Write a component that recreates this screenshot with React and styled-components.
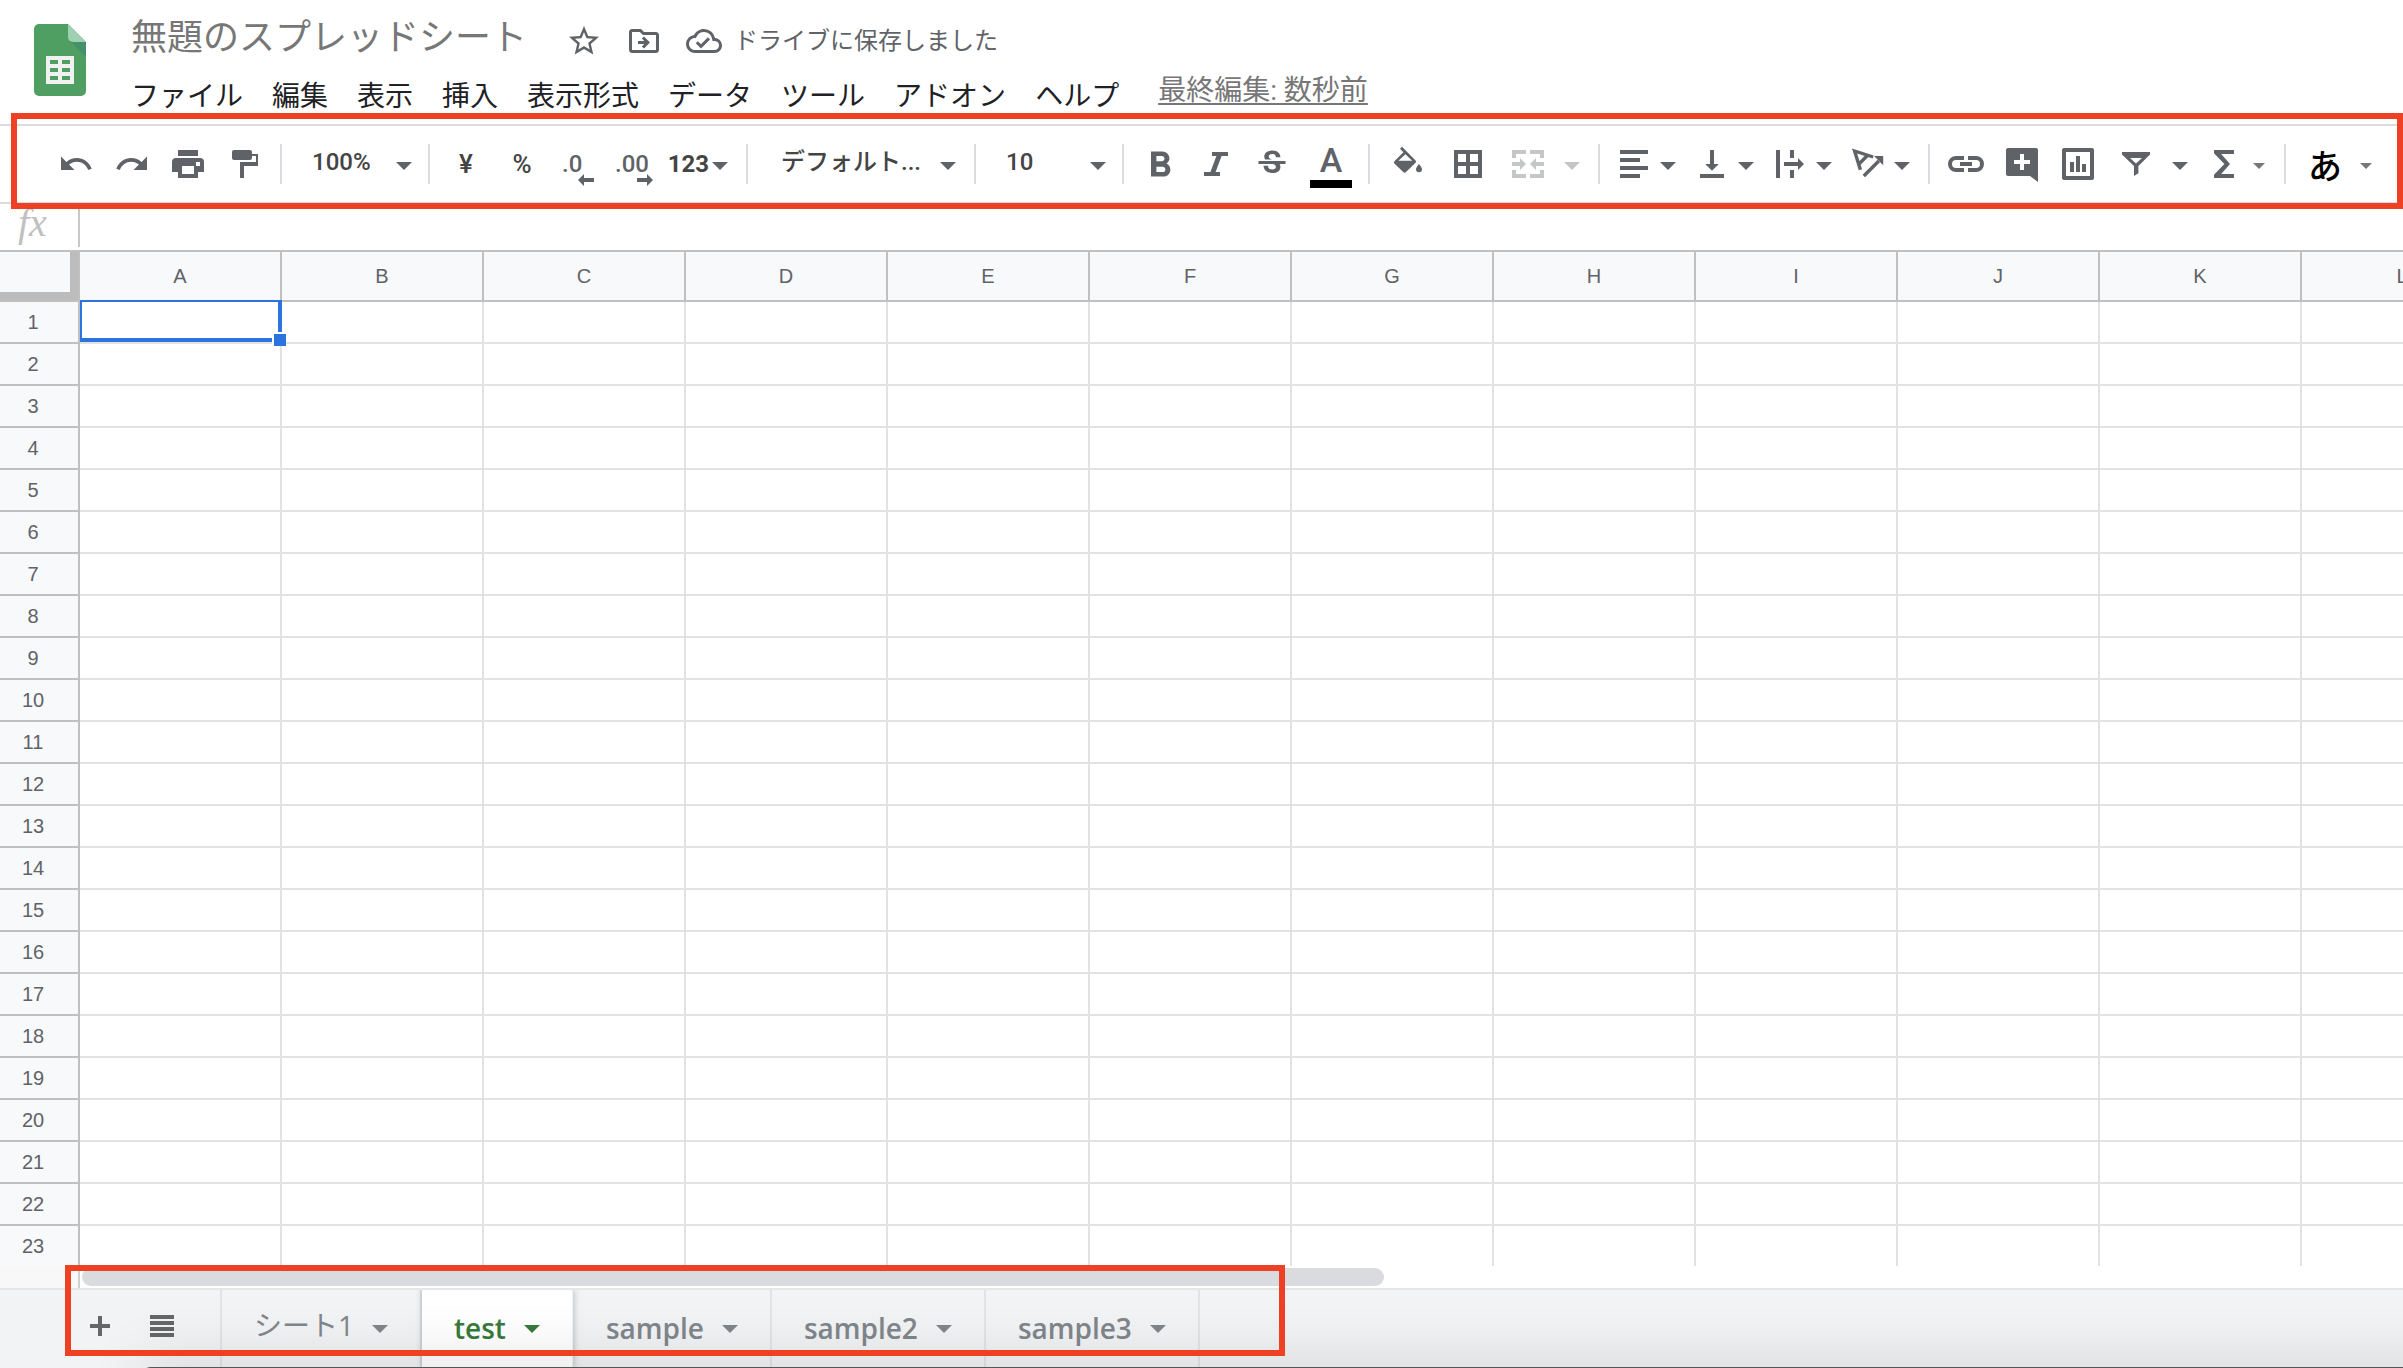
import React from "react";
import styled, { createGlobalStyle } from "styled-components";
import {
  MdUndo,
  MdRedo,
  MdStarBorder,
  MdOutlineDriveFileMove,
  MdOutlineCloudDone,
  MdFormatBold,
  MdStrikethroughS,
} from "react-icons/md";

const MENUS = ["ファイル", "編集", "表示", "挿入", "表示形式", "データ", "ツール", "アドオン", "ヘルプ"];
const COLUMNS = ["A", "B", "C", "D", "E", "F", "G", "H", "I", "J", "K", "L"];
const ROWS = Array.from({ length: 23 }, (_, i) => i + 1);
const SHEETS = [
  { name: "シート1", kana: true },
  { name: "test", active: true },
  { name: "sample" },
  { name: "sample2" },
  { name: "sample3" },
];

// toolbar icons, all on an 18 x 18 grid
const ICONS = {
  print:
    "M4 2h10v3H4z M3 6h12a2 2 0 0 1 2 2v5h-3v3H4v-3H1V8a2 2 0 0 1 2-2z M6 10v4h6v-4z M13 8v2h2V8z",
  paint: "M4 2h8a1 1 0 0 1 1 1v1h3v6H9v6H7V8h8V5h-2v1a1 1 0 0 1-1 1H4a1 1 0 0 1-1-1V3a1 1 0 0 1 1-1z",
  italic: "M7 3h8v2h-3.2L8.8 13H11v2H3v-2h3.2L9.2 5H7z",
  fill:
    "M12.8 7.2 6 .4 5 1.4l1.7 1.7-4.5 4.5a.9.9 0 0 0 0 1.2l4.4 4.2a1 1 0 0 0 1.4 0l4.8-4.6a.9.9 0 0 0 0-1.2z M4.2 7.4 7.7 4.1l3.4 3.3z M14.5 9s-1.5 1.7-1.5 2.6a1.5 1.5 0 0 0 3 0C16 10.7 14.5 9 14.5 9z",
  borders: "M2 2v14h14V2z M8 14H4v-4h4z M8 8H4V4h4z M14 14h-4v-4h4z M14 8h-4V4h4z",
  merge:
    "M1 2h7v2H3v2H1z M10 2h7v4h-2V4h-5z M1 12h2v2h5v2H1z M15 12h2v4h-7v-2h5z M1 8h4V6l3 3-3 3v-2H1z M17 8h-4V6l-3 3 3 3v-2h4z",
  align: "M2 2h14v2H2z M2 6h10v2H2z M2 10h14v2H2z M2 14h10v2H2z",
  valign: "M3 14h12v2H3z M8 2h2v7h2.4L9 12.4 5.6 9H8z",
  wrap: "M2 2h2v14H2z M9 2h2v4H9z M9 12h2v4H9z M6 8h7V6l3 3-3 3v-2H6z",
  link:
    "M8 5H4a4 4 0 0 0 0 8h4v-2H4a2 2 0 0 1 0-4h4z M10 5h4a4 4 0 0 1 0 8h-4v-2h4a2 2 0 0 0 0-4h-4z M6 8h6v2H6z",
  comment:
    "M2 1h14a1 1 0 0 1 1 1v16l-4-3H2a1 1 0 0 1-1-1V2a1 1 0 0 1 1-1z M8 4v3H5v2h3v3h2V9h3V7h-3V4z",
  chart:
    "M2 1h14a1 1 0 0 1 1 1v14a1 1 0 0 1-1 1H2a1 1 0 0 1-1-1V2a1 1 0 0 1 1-1z M3 3v12h12V3z M5 8h2v5H5z M8 5h2v8H8z M11 9h2v4h-2z",
  filter: "M2 3h14v1.2L10.2 10v3.6L8 15v-5L2 4.2z M6 6l3 2.8L12 6z",
  sigma: "M4 2h10v2H7.6l4.4 5-4.4 5H14v2H4v-1.6L9.2 9 4 3.6z",
};

function Icon({ name }) {
  return (
    <IconSvg viewBox="0 0 18 18" aria-hidden="true">
      <path fillRule="evenodd" d={ICONS[name]} />
    </IconSvg>
  );
}

function RotateIcon() {
  return (
    <IconSvg viewBox="0 0 18 18" aria-hidden="true">
      <path
        d="M11.6 5.5 2.3 2.5 5.2 11.9 M8.6 4.9 4.6 8.9 M6.9 15 14.4 7.5"
        fill="none"
        stroke="currentColor"
        strokeWidth="1.7"
      />
      <path d="M12 5h4.6v4.6z" />
    </IconSvg>
  );
}

function Arrow({ small }) {
  return (
    <Caret $small={small} viewBox="0 0 16 8" aria-hidden="true">
      <path d="M0 0h16L8 8z" />
    </Caret>
  );
}

function Logo() {
  return (
    <LogoSvg viewBox="0 0 52 72" role="img" aria-label="スプレッドシート">
      <path d="M5 0h29l18 18v49a5 5 0 0 1-5 5H5a5 5 0 0 1-5-5V5a5 5 0 0 1 5-5z" fill="#4f9f63" />
      <path d="M36 17l16 16V18z" fill="#45906a" />
      <path d="M34 0l18 18H39a5 5 0 0 1-5-5z" fill="#9fd0b2" />
      <path
        d="M12 32h28v28H12z M16 36v4h8v-4z M28 36v4h8v-4z M16 44v4h8v-4z M28 44v4h8v-4z M16 52v4h8v-4z M28 52v4h8v-4z"
        fill="#f1f1f1"
        fillRule="evenodd"
      />
    </LogoSvg>
  );
}

function Decimal({ text, label, right }) {
  return (
    <ToolButton aria-label={label}>
      <DecimalText $right={right}>
        {text}
        <svg width="16" height="12" viewBox="0 0 16 12" aria-hidden="true">
          <path d={right ? "M0 4h10V0l6 6-6 6V8H0z" : "M16 4H6V0L0 6l6 6V8h10z"} />
        </svg>
      </DecimalText>
    </ToolButton>
  );
}

function ToolSelect({ label, value, wide }) {
  return (
    <SelectBox $wide={wide}>
      <select aria-label={label} defaultValue={value}>
        <option>{value}</option>
      </select>
      <Arrow />
    </SelectBox>
  );
}

function Toolbar() {
  return (
    <ToolbarRow role="toolbar">
      <ToolButton aria-label="元に戻す"><MdUndo size={36} /></ToolButton>
      <ToolButton aria-label="やり直し"><MdRedo size={36} /></ToolButton>
      <ToolButton aria-label="印刷"><Icon name="print" /></ToolButton>
      <ToolButton aria-label="書式を貼り付け"><Icon name="paint" /></ToolButton>
      <Divider />
      <ToolSelect label="ズーム" value="100%" />
      <Divider />
      <ToolButton $text>¥</ToolButton>
      <ToolButton $text>%</ToolButton>
      <Decimal text=".0" label="小数点以下の桁数を減らす" />
      <Decimal text=".00" label="小数点以下の桁数を増やす" right />
      <FormatButton>123<Arrow /></FormatButton>
      <Divider />
      <ToolSelect label="フォント" value="デフォルト..." wide />
      <Divider />
      <ToolSelect label="フォントサイズ" value="10" />
      <Divider />
      <ToolButton aria-label="太字"><MdFormatBold size={36} viewBox="2 1 20 20" /></ToolButton>
      <ToolButton aria-label="斜体"><Icon name="italic" /></ToolButton>
      <ToolButton aria-label="取り消し線"><MdStrikethroughS size={36} /></ToolButton>
      <ColorButton>
        A
        <ColorBar />
      </ColorButton>
      <Divider />
      <ToolButton $wide aria-label="塗りつぶしの色"><Icon name="fill" /></ToolButton>
      <ToolButton $wide aria-label="枠線"><Icon name="borders" /></ToolButton>
      <MenuButton $wide disabled aria-label="セルを結合"><Icon name="merge" /><Arrow /></MenuButton>
      <Divider />
      <MenuButton aria-label="水平方向の配置"><Icon name="align" /><Arrow /></MenuButton>
      <MenuButton aria-label="垂直方向の配置"><Icon name="valign" /><Arrow /></MenuButton>
      <MenuButton aria-label="テキストの折り返し"><Icon name="wrap" /><Arrow /></MenuButton>
      <MenuButton aria-label="テキストの回転"><RotateIcon /><Arrow /></MenuButton>
      <Divider />
      <ToolButton aria-label="リンクを挿入"><Icon name="link" /></ToolButton>
      <ToolButton aria-label="コメントを挿入"><Icon name="comment" /></ToolButton>
      <ToolButton aria-label="グラフを挿入"><Icon name="chart" /></ToolButton>
      <MenuButton $wide aria-label="フィルタを作成"><Icon name="filter" /><Arrow /></MenuButton>
      <FunctionButton aria-label="関数"><Icon name="sigma" /><Arrow small /></FunctionButton>
      <Divider />
      <InputToolButton>あ<Arrow small /></InputToolButton>
      <ToolbarFrame />
    </ToolbarRow>
  );
}

function Grid() {
  return (
    <GridArea>
      <Table>
        <colgroup>
          <col className="rows" />
          {COLUMNS.map((c) => <col key={c} />)}
        </colgroup>
        <thead>
          <tr>
            <Corner aria-label="すべて選択" />
            {COLUMNS.map((c) => <ColumnHead key={c} scope="col">{c}</ColumnHead>)}
          </tr>
        </thead>
        <tbody>
          {ROWS.map((row) => (
            <tr key={row}>
              <RowHead scope="row">{row}</RowHead>
              {COLUMNS.map((c) => (
                <Cell key={c}>{row === 1 && c === "A" && <Selection />}</Cell>
              ))}
            </tr>
          ))}
        </tbody>
      </Table>
    </GridArea>
  );
}

function App() {
  return (
    <Page>
      <GlobalStyle />
      <Header>
        <Logo />
        <div>
          <TitleRow>
            <h1>無題のスプレッドシート</h1>
            <IconButton aria-label="スターを付ける"><MdStarBorder size={36} /></IconButton>
            <IconButton aria-label="移動"><MdOutlineDriveFileMove size={36} /></IconButton>
            <Saved><MdOutlineCloudDone size={36} />ドライブに保存しました</Saved>
          </TitleRow>
          <MenuRow>
            {MENUS.map((m) => <button key={m}>{m}</button>)}
            <a href="#history">最終編集: 数秒前</a>
          </MenuRow>
        </div>
      </Header>
      <Toolbar />
      <FormulaBar>
        <label htmlFor="formula">fx</label>
        <input id="formula" type="text" />
      </FormulaBar>
      <Grid />
      <ScrollRow>
        <ScrollGutter />
        <ScrollThumb />
      </ScrollRow>
      <SheetBar>
        <SheetStrip>
          <SheetTools>
            <button aria-label="シートを追加">
              <svg width="20" height="20" viewBox="0 0 20 20"><path d="M8 0h4v8h8v4h-8v8H8v-8H0V8h8z" /></svg>
            </button>
            <button aria-label="すべてのシート">
              <svg width="24" height="22" viewBox="0 0 24 22">
                <path d="M0 0h24v4H0z M0 6h24v4H0z M0 12h24v4H0z M0 18h24v4H0z" />
              </svg>
            </button>
          </SheetTools>
          {SHEETS.map((s) => (
            <SheetTab key={s.name} $active={s.active}>
              <SheetName $kana={s.kana}>{s.name}</SheetName>
              <Arrow />
            </SheetTab>
          ))}
          <SheetFrame />
        </SheetStrip>
        <WindowEdge />
      </SheetBar>
    </Page>
  );
}

const GlobalStyle = createGlobalStyle`
  * {
    box-sizing: border-box;
  }

  body {
    margin: 0;
    background: #fff;
    font-family: Roboto, "Noto Sans CJK JP", sans-serif;
    color: #5f6368;
  }

  button, select, input {
    font-family: inherit;
    color: inherit;
    background: none;
    border: none;
    padding: 0;
    margin: 0;
  }

  svg {
    fill: currentColor;
    flex-shrink: 0;
  }
`;

const Page = styled.div`
  display: flex;
  flex-direction: column;
  height: 100vh;
  overflow: hidden;
`;

const Header = styled.header`
  display: flex;
  gap: 45px;
  height: 124px;
  padding-left: 34px;
`;

const LogoSvg = styled.svg`
  width: 52px;
  height: 72px;
  margin-top: 24px;
`;

const TitleRow = styled.div`
  display: flex;
  align-items: center;
  gap: 24px;
  height: 74px;
  padding-top: 8px;

  h1 {
    margin: 0 15px 6px 0;
    font-size: 36px;
    line-height: 44px;
    font-weight: 400;
    color: #777;
  }
`;

const IconButton = styled.button`
  display: flex;
`;

const Saved = styled.div`
  display: flex;
  align-items: center;
  gap: 12px;
  font-size: 24px;
  line-height: 32px;
`;

const MenuRow = styled.nav`
  display: flex;
  gap: 29px;
  height: 40px;
  font-size: 28px;
  line-height: 40px;

  button {
    font-size: 28px;
    color: #202124;
    white-space: nowrap;
  }

  a {
    margin-left: 10px;
    line-height: 34px;
    color: #777;
    text-underline-offset: 3px;
    white-space: nowrap;
  }
`;

const ToolbarRow = styled.div`
  position: relative;
  display: flex;
  align-items: center;
  flex-shrink: 0;
  height: 80px;
  padding-left: 48px;
  border-top: 2px solid #dadce0;
  border-bottom: 2px solid #dadce0;
`;

const Frame = styled.div`
  position: absolute;
  border: 6px solid #ee4023;
  pointer-events: none;
  z-index: 2;
`;

const ToolbarFrame = styled(Frame)`
  top: -13px;
  right: 0;
  bottom: -7px;
  left: 11px;
`;

const Divider = styled.span`
  flex-shrink: 0;
  width: 2px;
  height: 40px;
  margin: 0 8px;
  background: #dadce0;
`;

const ToolButton = styled.button`
  display: flex;
  align-items: center;
  justify-content: center;
  flex-shrink: 0;
  width: ${(p) => (p.$wide ? 60 : 56)}px;
  height: 56px;
  font-size: 26px;
  font-weight: 500;
  color: ${(p) => (p.$text ? "#444" : "#5f6368")};
`;

const IconSvg = styled.svg`
  width: 36px;
  height: 36px;
  overflow: visible;
`;

const Caret = styled.svg`
  width: ${(p) => (p.$small ? 12 : 16)}px;
  height: ${(p) => (p.$small ? 6 : 8)}px;
  margin-top: 4px;
  ${(p) => p.$small && "color: #777;"}
`;

const DecimalText = styled.span`
  position: relative;
  width: ${(p) => (p.$right ? 38 : 32)}px;
  font-size: 24px;
  line-height: 28px;
  text-align: left;

  svg {
    position: absolute;
    right: 0;
    top: 24px;
  }
`;

const FormatButton = styled(ToolButton)`
  justify-content: flex-end;
  width: 76px;
  padding-right: 10px;
  gap: 3px;
  font-size: 24px;
  font-weight: 700;
  color: #444;

  svg {
    color: #5f6368;
  }
`;

const SelectBox = styled.div`
  display: flex;
  align-items: center;
  flex-shrink: 0;
  width: ${(p) => (p.$wide ? 210 : 130)}px;
  height: 56px;
  padding: ${(p) => (p.$wide ? "0 10px 0 25px" : "0 8px 0 22px")};

  select {
    appearance: none;
    flex: 1;
    min-width: 0;
    height: 40px;
    margin-bottom: 4px;
    font-size: 24px;
    font-weight: 500;
    color: #444;
  }
`;

const ColorButton = styled(ToolButton)`
  flex-direction: column;
  gap: 4px;
  width: 60px;
  padding: 4px 0 0 2px;
  font-size: 34px;
  line-height: 32px;
`;

const ColorBar = styled.span`
  width: 42px;
  height: 8px;
  background: #000;
`;

const MenuButton = styled(ToolButton)`
  justify-content: flex-start;
  gap: ${(p) => (p.$wide ? 18 : 8)}px;
  width: ${(p) => (p.$wide ? 92 : 78)}px;
  padding-left: ${(p) => (p.$wide ? 12 : 8)}px;

  &:disabled {
    color: #c4c6c8;
  }
`;

const FunctionButton = styled(MenuButton)`
  gap: 11px;
`;

const InputToolButton = styled(ToolButton)`
  width: 92px;
  gap: 18px;
  font-size: 34px;
  color: #000;
`;

const FormulaBar = styled.div`
  display: flex;
  align-items: center;
  flex-shrink: 0;
  height: 46px;

  label {
    width: 78px;
    padding: 0 0 8px 18px;
    font-family: "Liberation Serif", serif;
    font-size: 40px;
    line-height: 40px;
    font-style: italic;
    color: #c0c0c0;
  }

  input {
    flex: 1;
    height: 40px;
    padding: 0 8px;
    border-left: 2px solid #c8c8c8;
    font-size: 24px;
  }
`;

const GridArea = styled.main`
  flex: 1;
  min-height: 0;
  overflow: hidden;
  border-top: 2px solid #c0c0c0;
`;

const Table = styled.table`
  table-layout: fixed;
  width: 2504px;
  border-collapse: separate;
  border-spacing: 0;

  col {
    width: 202px;
  }

  .rows {
    width: 80px;
  }
`;

const HeadCell = styled.th`
  padding: 1px 0 0;
  background: #f8f9fa;
  border-right: 2px solid #c0c0c0;
  border-bottom: 2px solid #c0c0c0;
  font-family: "Liberation Sans", Arial, sans-serif;
  font-size: 20px;
  font-weight: 400;
  color: #5f6368;
`;

const ColumnHead = styled(HeadCell)`
  height: 50px;
`;

const Corner = styled(HeadCell)`
  box-shadow: inset -8px -8px 0 #bcbcbc;
`;

const RowHead = styled(HeadCell)`
  height: 42px;
  padding-right: 12px;
`;

const Cell = styled.td`
  position: relative;
  height: 42px;
  padding: 0;
  border-right: 2px solid #e2e2e2;
  border-bottom: 2px solid #e2e2e2;
`;

const Selection = styled.div`
  position: absolute;
  z-index: 1;
  top: -2px;
  right: -2px;
  bottom: 0;
  left: 0;
  border: 2px solid #2c73e0;
  border-right-width: 4px;
  border-bottom-width: 4px;

  &::after {
    content: "";
    position: absolute;
    right: -8px;
    bottom: -8px;
    width: 12px;
    height: 12px;
    border: 2px solid #fff;
    border-right: none;
    border-bottom: none;
    background: #2c73e0;
  }
`;

const ScrollRow = styled.div`
  display: flex;
  align-items: center;
  flex-shrink: 0;
  height: 22px;
`;

const ScrollGutter = styled.div`
  width: 80px;
  height: 22px;
  margin-right: 2px;
  background: #f8f8f9;
  border-right: 2px solid #d0d0d0;
`;

const ScrollThumb = styled.div`
  width: 1302px;
  max-width: 56%;
  height: 18px;
  border-radius: 9px;
  background: #dadbdf;
`;

const SheetBar = styled.footer`
  position: relative;
  flex-shrink: 0;
  height: 80px;
  background: #f1f3f4;
  border-top: 2px solid #e6e6ea;
`;

const SheetStrip = styled.div`
  position: relative;
  display: flex;
  width: max-content;
  height: 78px;
`;

const SheetTools = styled.div`
  display: flex;
  align-items: center;
  gap: 40px;
  width: 222px;
  padding-left: 90px;
  padding-bottom: 6px;
  border-right: 2px solid #e2e3e6;
  color: #666;

  button {
    display: flex;
  }
`;

const SheetTab = styled.button`
  display: flex;
  align-items: center;
  gap: 18px;
  height: 78px;
  padding: 0 32px;
  border-right: 2px solid #e2e3e6;
  color: ${(p) => (p.$active ? "#37793b" : "#80868b")};

  ${(p) =>
    p.$active &&
    `
    background: #fff;
    border-right-color: transparent;
    background-clip: padding-box;
    box-shadow: 0 0 6px rgba(60, 64, 67, 0.3);
    clip-path: inset(0 -8px);
  `}

  svg {
    margin-top: 0;
  }
`;

const SheetName = styled.span`
  margin-bottom: ${(p) => (p.$kana ? 8 : 2)}px;
  font-family: "Open Sans", "Noto Sans CJK JP", sans-serif;
  font-size: 28px;
  font-weight: ${(p) => (p.$kana ? 400 : 600)};
  line-height: 36px;
`;

const SheetFrame = styled(Frame)`
  top: -25px;
  right: -85px;
  bottom: 12px;
  left: 65px;
`;

// top edge of the window below and the shadow it throws on the sheet bar
const WindowEdge = styled.div`
  position: absolute;
  right: -80px;
  bottom: -19px;
  left: 141px;
  height: 20px;
  border-radius: 10px;
  background: #555;
  box-shadow: 0 0 60px rgba(0, 0, 0, 0.24);
  pointer-events: none;
`;

export default App;
